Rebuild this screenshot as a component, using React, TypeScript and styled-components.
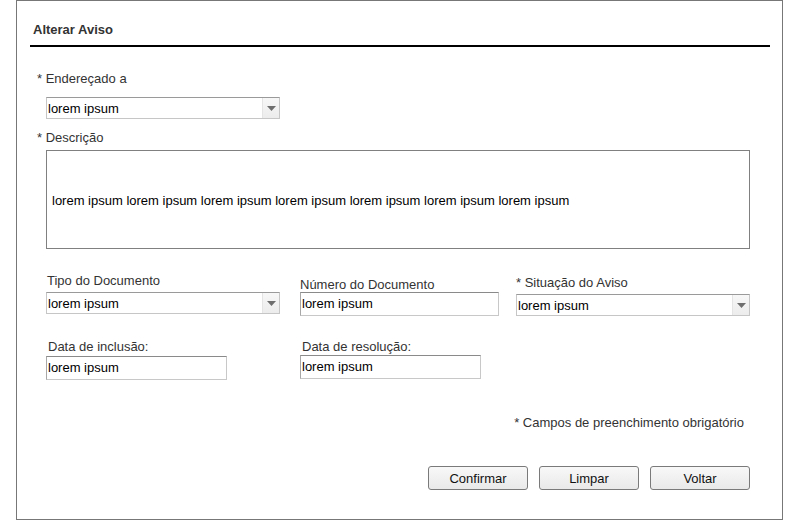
import React from "react";
import styled, { createGlobalStyle } from "styled-components";

const Global = createGlobalStyle`
  html, body { margin: 0; padding: 0; background: #fff; }
  body { font-family: "Liberation Sans", Arial, sans-serif; font-size: 13px; color: #333; }
  * { box-sizing: border-box; }
`;

const Frame = styled.div`
  margin-left: 16px;
  width: 767px;
  height: 520px;
  border: 1px solid #777;
  background: #fff;
`;

const Header = styled.div`
  margin: 0 12px 0 13px;
  padding: 21px 0 8px 3px;
  border-bottom: 2px solid #000;
`;

const Title = styled.h1`
  margin: 0;
  font-size: 13px;
  line-height: 15px;
  font-weight: bold;
  color: #333;
`;

const Body = styled.div`
  padding-left: 29px;
  display: flex;
  flex-direction: column;
  align-items: flex-start;
`;

const Label = styled.div<{ $mt?: number; $outdent?: boolean; $pl?: number }>`
  margin-top: ${(p) => p.$mt ?? 0}px;
  margin-left: ${(p) => (p.$outdent ? -9 : 0)}px;
  padding-left: ${(p) => p.$pl ?? 0}px;
  font-size: 13px;
  line-height: 15px;
  color: #333;
  white-space: nowrap;
`;

const SelectBox = styled.div<{ $mt?: number; $w: number }>`
  margin-top: ${(p) => p.$mt ?? 0}px;
  width: ${(p) => p.$w}px;
  height: 22px;
  display: flex;
  align-items: stretch;
  border: 1px solid #c6c6c6;
  border-top-color: #9a9a9a;
  background: #fff;
`;

const SelectValue = styled.div`
  flex: 1;
  padding-left: 1px;
  font-size: 13px;
  line-height: 21px;
  color: #000;
`;

const SelectArrow = styled.div`
  width: 17px;
  display: flex;
  align-items: center;
  justify-content: center;
  border-left: 1px solid #e4e4e4;
  background: linear-gradient(#f7f7f7, #ececec);
`;

const TextInput = styled.div<{ $w: number; $mt?: number }>`
  margin-top: ${(p) => p.$mt ?? 0}px;
  width: ${(p) => p.$w}px;
  height: 24px;
  border: 1px solid #c8c8c8;
  border-top-color: #8a8a8a;
  border-left-color: #a8a8a8;
  padding-left: 1px;
  font-size: 13px;
  line-height: 22px;
  color: #000;
`;

const TextBox = styled.div<{ $mt?: number }>`
  margin-top: ${(p) => p.$mt ?? 0}px;
  width: 704px;
  height: 99px;
  border: 1px solid #808080;
  padding: 2px 0 0 5px;
  display: flex;
  align-items: center;
  font-size: 13px;
  color: #000;
`;

const FieldRow = styled.div<{ $mt: number }>`
  margin-top: ${(p) => p.$mt}px;
  display: grid;
  grid-template-columns: 254px 216px 234px;
  align-items: start;
`;

const Field = styled.div<{ $offset?: number }>`
  padding-top: ${(p) => p.$offset ?? 0}px;
  display: flex;
  flex-direction: column;
  align-items: flex-start;
`;

const Footnote = styled.div<{ $mt: number }>`
  margin-top: ${(p) => p.$mt}px;
  width: 704px;
  padding-right: 6px;
  text-align: right;
  font-size: 13px;
  line-height: 15px;
  color: #333;
`;

const ButtonBar = styled.div<{ $mt: number }>`
  margin-top: ${(p) => p.$mt}px;
  width: 704px;
  display: flex;
  justify-content: flex-end;
  gap: 11px;
`;

const Button = styled.button`
  width: 100px;
  height: 24px;
  border: 1px solid #7a7a7a;
  border-radius: 3px;
  background: linear-gradient(#f8f8f8, #e9e9e9);
  font-family: "Liberation Sans", Arial, sans-serif;
  font-size: 13px;
  color: #111;
  padding: 0;
  cursor: pointer;
`;

const Arrow = () => (
  <svg width="9" height="5" viewBox="0 0 9 5">
    <path d="M0 0 H9 L4.5 5 Z" fill="#6e6e6e" />
  </svg>
);

const Select = ({ w, mt, value }: { w: number; mt?: number; value: string }) => (
  <SelectBox $w={w} $mt={mt}>
    <SelectValue>{value}</SelectValue>
    <SelectArrow>
      <Arrow />
    </SelectArrow>
  </SelectBox>
);

export default function App() {
  const lorem = "lorem ipsum";
  return (
    <>
      <Global />
      <Frame>
        <Header>
          <Title>Alterar Aviso</Title>
        </Header>
        <Body>
          <Label $mt={24} $outdent>
            * Endereçado a
          </Label>
          <Select w={234} mt={11} value={lorem} />
          <Label $mt={11} $outdent>
            * Descrição
          </Label>
          <TextBox $mt={5}>{Array(7).fill(lorem).join(" ")}</TextBox>

          <FieldRow $mt={24}>
            <Field>
              <Label $pl={1}>Tipo do Documento</Label>
              <Select w={234} mt={4} value={lorem} />
            </Field>
            <Field $offset={4}>
              <Label>Número do Documento</Label>
              <TextInput $w={199}>{lorem}</TextInput>
            </Field>
            <Field $offset={2}>
              <Label>* Situação do Aviso</Label>
              <Select w={234} mt={4} value={lorem} />
            </Field>
          </FieldRow>

          <FieldRow $mt={23}>
            <Field>
              <Label $pl={2}>Data de inclusão:</Label>
              <TextInput $w={181} $mt={2}>
                {lorem}
              </TextInput>
            </Field>
            <Field>
              <Label $pl={2}>Data de resolução:</Label>
              <TextInput $w={181} $mt={1}>
                {lorem}
              </TextInput>
            </Field>
            <div />
          </FieldRow>

          <Footnote $mt={35}>* Campos de preenchimento obrigatório</Footnote>

          <ButtonBar $mt={36}>
            <Button>Confirmar</Button>
            <Button>Limpar</Button>
            <Button>Voltar</Button>
          </ButtonBar>
        </Body>
      </Frame>
    </>
  );
}
